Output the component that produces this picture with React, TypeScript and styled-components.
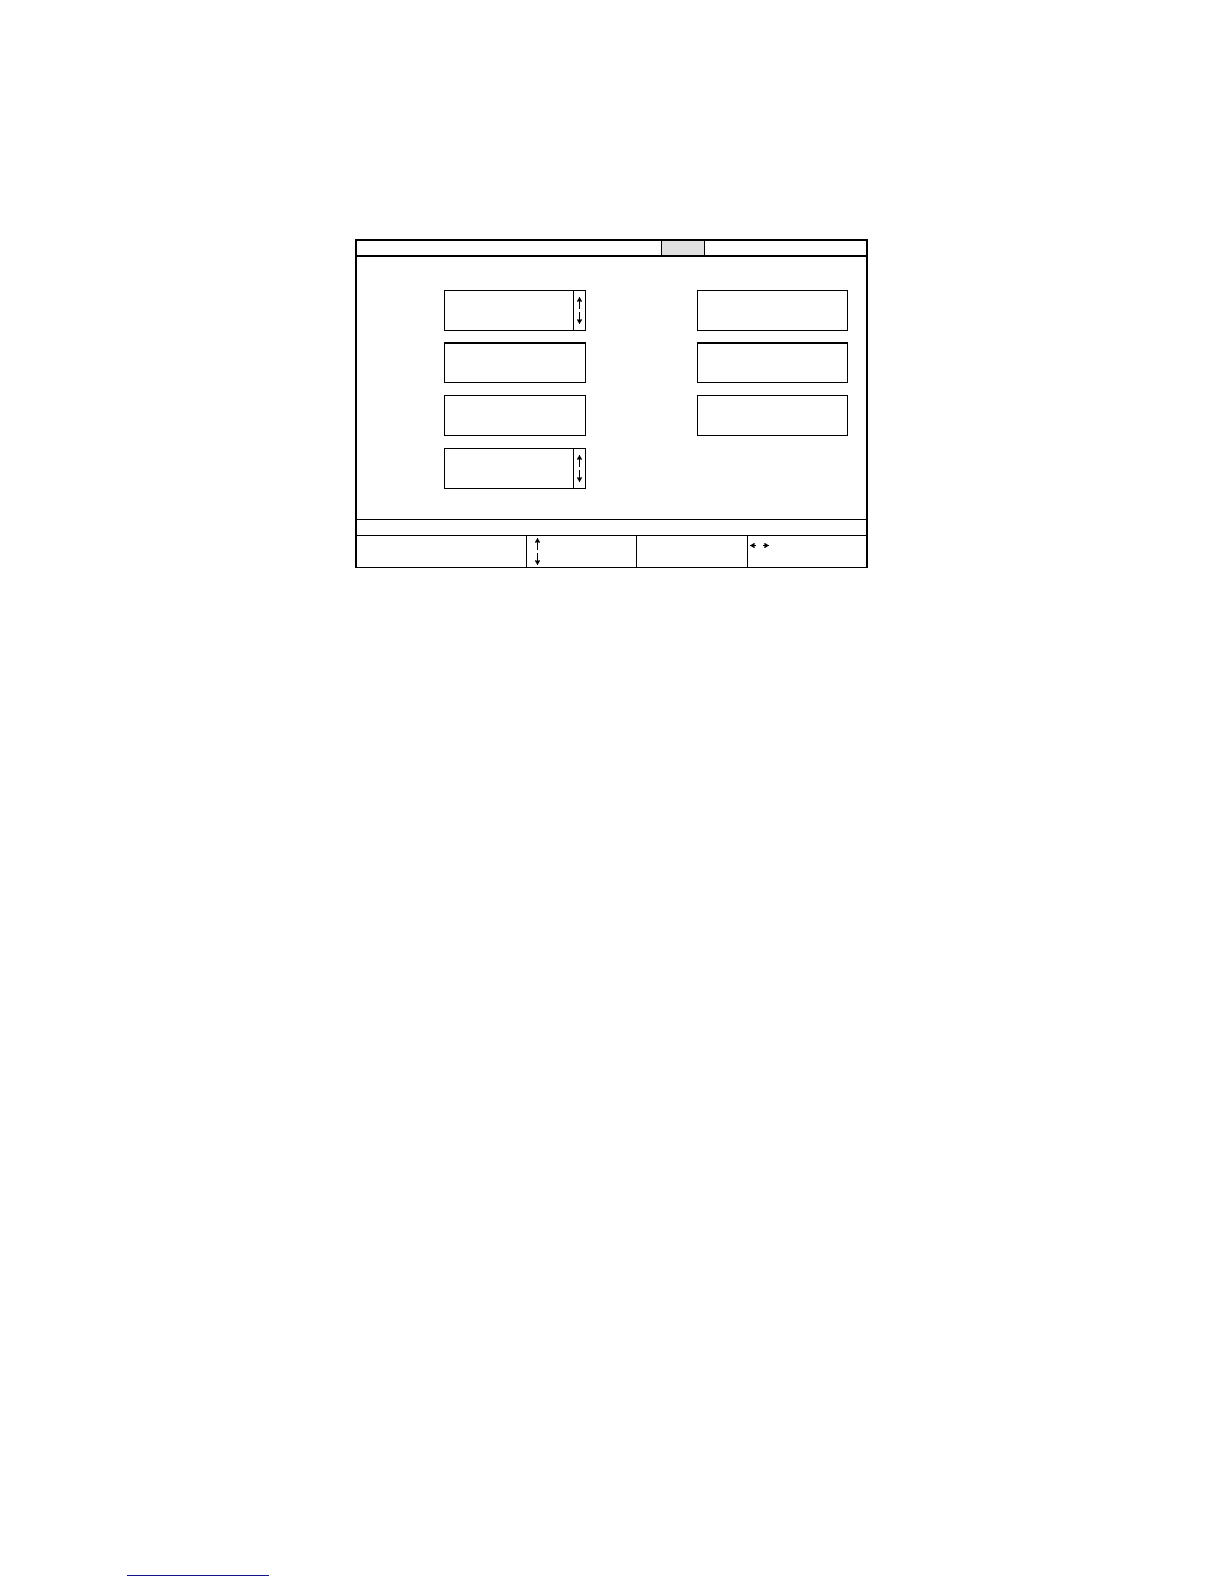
import React from "react";
import styled, { createGlobalStyle, css } from "styled-components";

const INK = "#000";

const GlobalStyle = createGlobalStyle`
  *, *::before, *::after { box-sizing: border-box; }
  body {
    margin: 0;
    background: #fff;
    color: ${INK};
    font: 12px/16px "Liberation Sans", Arial, sans-serif;
  }
`;

const Page = styled.div`
  display: flex;
  flex-direction: column;
  min-height: 100vh;
`;

const Main = styled.main`
  display: flex;
  justify-content: center;
  padding: 239px 25px 32px 24px;
`;

const Panel = styled.form`
  width: 100%;
  max-width: 513px;
  border: 2px solid ${INK};
  border-bottom-width: 1px;
`;

const MenuBar = styled.nav`
  display: flex;
  justify-content: flex-end;
  height: 16px;
  padding-right: 161px;
  border-bottom: 2px solid ${INK};
`;

const MenuTab = styled.button`
  width: 44px;
  padding: 0;
  border: solid ${INK};
  border-width: 0 1px;
  background: #e0e0e0;
`;

const Fields = styled.div`
  display: flex;
  justify-content: space-between;
  padding: 33px 18px 30px 87px;
`;

const Column = styled.div<{ $width: number }>`
  display: flex;
  flex-direction: column;
  gap: 12px;
  width: ${(p) => p.$width}px;
`;

const FieldBox = styled.div<{ $heavy?: boolean }>`
  display: flex;
  height: 41px;
  border: 1px solid ${INK};
  ${(p) =>
    p.$heavy &&
    css`
      height: 40px;
      box-shadow: 0 -1px 0 ${INK};
    `}
`;

const FieldInput = styled.input`
  flex: 1;
  min-width: 0;
  padding: 0 8px;
  border: 0;
  outline: 0;
  background: transparent;
  font: inherit;
`;

const Spinner = styled.div`
  display: flex;
  flex-direction: column;
  align-items: center;
  justify-content: center;
  gap: 3px;
  width: 12px;
  border-left: 1px solid ${INK};
`;

const ArrowButton = styled.button`
  display: flex;
  padding: 0;
  border: 0;
  background: none;
  color: inherit;
`;

const StatusLine = styled.div`
  height: 17px;
  border: solid ${INK};
  border-width: 1px 0;
`;

const KeyBar = styled.div`
  display: grid;
  grid-template-columns: 170fr 110fr 111fr 118fr;
  height: 31px;
`;

const KeyCell = styled.div`
  border-right: 1px solid ${INK};

  &:last-child {
    border-right: 0;
  }
`;

const VerticalKeys = styled(KeyCell)`
  display: flex;
  flex-direction: column;
  justify-content: center;
  gap: 3px;
  padding-left: 8px;
`;

const HorizontalKeys = styled(KeyCell)`
  display: flex;
  align-items: flex-start;
  gap: 7px;
  padding: 7px 2px;
`;

const PageFooter = styled.footer`
  margin-top: auto;
  padding: 0 24px 8px 127px;
`;

const FooterLink = styled.a`
  display: block;
  width: 142px;
  height: 16px;
  border-bottom: 1px solid #14148a;
`;

type Direction = "up" | "down" | "left" | "right";

function Arrow({ direction }: { direction: Direction }) {
  if (direction === "up" || direction === "down") {
    return (
      <svg width="5" height="12" viewBox="0 0 5 12" aria-hidden="true">
        <g transform={direction === "down" ? "rotate(180 2.5 6)" : undefined}>
          <path d="M2.5 0 L5 4 L4.5 5 L2.5 4 L0.5 5 L0 4 Z" />
          <rect x="2" y="0" width="1" height="12" />
        </g>
      </svg>
    );
  }
  return (
    <svg width="6" height="5" viewBox="0 0 6 5" aria-hidden="true">
      <g transform={direction === "right" ? "rotate(180 3 2.5)" : undefined}>
        <path d="M0 2.5 L4 0 L5 0.5 L4 2.5 L5 4.5 L4 5 Z" />
        <rect x="0" y="2" width="6" height="1" />
      </g>
    </svg>
  );
}

function ArrowKey({ direction, label }: { direction: Direction; label: string }) {
  return (
    <ArrowButton type="button" aria-label={label}>
      <Arrow direction={direction} />
    </ArrowButton>
  );
}

interface FieldProps {
  label: string;
  heavy?: boolean;
  stepped?: boolean;
}

function Field({ label, heavy, stepped }: FieldProps) {
  return (
    <FieldBox $heavy={heavy}>
      <FieldInput type="text" aria-label={label} />
      {stepped && (
        <Spinner>
          <ArrowKey direction="up" label={`${label}: previous`} />
          <ArrowKey direction="down" label={`${label}: next`} />
        </Spinner>
      )}
    </FieldBox>
  );
}

const leftFields: FieldProps[] = [
  { label: "Field 1", stepped: true },
  { label: "Field 2", heavy: true },
  { label: "Field 3" },
  { label: "Field 4", stepped: true },
];

const rightFields: FieldProps[] = [
  { label: "Field 5" },
  { label: "Field 6", heavy: true },
  { label: "Field 7" },
];

export default function App() {
  return (
    <Page>
      <GlobalStyle />
      <Main>
        <Panel>
          <MenuBar aria-label="Menu">
            <MenuTab type="button" aria-label="Selected menu" />
          </MenuBar>
          <Fields>
            <Column $width={142}>
              {leftFields.map((field) => (
                <Field key={field.label} {...field} />
              ))}
            </Column>
            <Column $width={151}>
              {rightFields.map((field) => (
                <Field key={field.label} {...field} />
              ))}
            </Column>
          </Fields>
          <StatusLine role="status" />
          <KeyBar>
            <KeyCell />
            <VerticalKeys>
              <ArrowKey direction="up" label="Up" />
              <ArrowKey direction="down" label="Down" />
            </VerticalKeys>
            <KeyCell />
            <HorizontalKeys>
              <ArrowKey direction="left" label="Left" />
              <ArrowKey direction="right" label="Right" />
            </HorizontalKeys>
          </KeyBar>
        </Panel>
      </Main>
      <PageFooter>
        <FooterLink href="#" aria-label="Home page" />
      </PageFooter>
    </Page>
  );
}
